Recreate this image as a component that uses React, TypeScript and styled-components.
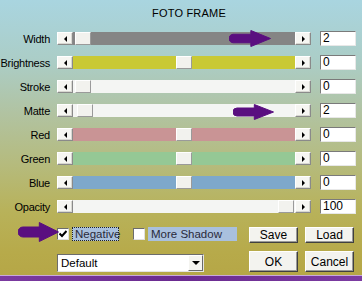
import styled, { createGlobalStyle } from "styled-components"

const GlobalStyle = createGlobalStyle`
    html, body {
        margin: 0;
        padding: 0;
    }
    body {
        font-family: "Liberation Sans", Arial, sans-serif;
        color: #000;
    }
`

const Window = styled.div`
    position: relative;
    width: 362px;
    height: 281px;
    overflow: hidden;
    display: flex;
    flex-direction: column;
    background: linear-gradient(
        to bottom,
        #a9d5e0 0%,
        #abcdc6 22%,
        #b1c3a2 40%,
        #b5bb7e 58%,
        #b8b25a 75%,
        #b7aa4a 90%,
        #b5a646 100%
    );
`

const Title = styled.div`
    height: 13px;
    line-height: 13px;
    padding-top: 7px;
    margin-bottom: 11px;
    padding-left: 16px;
    text-align: center;
    font-size: 11px;
    letter-spacing: 0.2px;
`

const Rows = styled.div`
    display: flex;
    flex-direction: column;
    gap: 9px;
`

const Row = styled.div`
    display: grid;
    grid-template-columns: 50px 254px 36px;
    column-gap: 7px;
    height: 15px;
    align-items: start;
`

const Label = styled.div`
    text-align: right;
    font-size: 11px;
    letter-spacing: -0.25px;
    line-height: 15px;
    margin-top: 1px;
    white-space: nowrap;
`

const SliderBox = styled.div`
    display: flex;
    height: 13px;
    margin-top: 1px;
`

const ScrollBtn = styled.div`
    width: 16px;
    height: 13px;
    box-sizing: border-box;
    background: #f6f6f2;
    border: 1px solid;
    border-color: #ffffff #8a8a8a #8a8a8a #ffffff;
    box-shadow: inset -1px -1px 0 #d8d8d2;
    display: flex;
    align-items: center;
    justify-content: center;
`

const Tri = styled.span<{ $dir: "left" | "right" | "down" }>`
    width: 0;
    height: 0;
    border-style: solid;
    border-color: transparent;
    ${p =>
        p.$dir === "left"
            ? "border-width: 3px 3px 3px 0; border-right-color: #000;"
            : p.$dir === "right"
            ? "border-width: 3px 0 3px 3px; border-left-color: #000;"
            : "border-width: 4px 4px 0 4px; border-top-color: #000;"}
`

const Track = styled.div<{ $fill: string }>`
    position: relative;
    flex: 1;
    background: ${p => p.$fill};
`

const Thumb = styled.div`
    position: absolute;
    top: 0;
    width: 16px;
    height: 13px;
    box-sizing: border-box;
    background: #f2f2ee;
    border: 1px solid;
    border-color: #ffffff #9a9a9a #9a9a9a #ffffff;
`

const ValueBox = styled.div`
    width: 36px;
    height: 15px;
    box-sizing: border-box;
    margin-left: 2px;
    background: #fff;
    border: 1px solid;
    border-color: #7a7a7a #e8e8e8 #e8e8e8 #7a7a7a;
    font-size: 12px;
    line-height: 13px;
    padding-left: 2px;
`

const Bottom = styled.div`
    display: flex;
    margin-top: 13px;
`

const LeftCol = styled.div`
    padding-left: 57px;
    width: 149px;
    flex-shrink: 0;
    display: flex;
    flex-direction: column;
    gap: 13px;
`

const CheckRow = styled.div`
    display: flex;
    align-items: center;
    height: 14px;
    & > * {
        flex-shrink: 0;
    }
`

const CheckBox = styled.div`
    width: 12px;
    height: 12px;
    box-sizing: border-box;
    background: #fff;
    border: 1px solid;
    border-color: #6c6c6c #e0e0e0 #e0e0e0 #6c6c6c;
    display: flex;
    align-items: center;
    justify-content: center;
`

const CheckLabel = styled.div<{ $focus?: boolean; $w: number }>`
    margin-left: 3px;
    width: ${p => p.$w}px;
    height: 14px;
    box-sizing: border-box;
    background: #a9c0de;
    font-size: 11.5px;
    line-height: 12px;
    color: #2a2a3a;
    padding-left: 2px;
    white-space: nowrap;
    border: 1px ${p => (p.$focus ? "dotted #222" : "solid transparent")};
`

const Spacer = styled.div`
    width: 14px;
`

const Select = styled.div`
    width: 147px;
    height: 18px;
    box-sizing: border-box;
    background: #fff;
    border: 1px solid;
    border-color: #6c6c6c #e4e4e4 #e4e4e4 #6c6c6c;
    display: flex;
    align-items: center;
    font-size: 11.5px;
    padding-left: 3px;
`

const SelectText = styled.span`
    flex: 1;
`

const SelectBtn = styled.div`
    width: 15px;
    height: 16px;
    box-sizing: border-box;
    background: #f4f4f0;
    border: 1px solid;
    border-color: #ffffff #6a6a6a #6a6a6a #ffffff;
    display: flex;
    align-items: center;
    justify-content: center;
`

const ButtonGrid = styled.div`
    margin-left: 43px;
    display: grid;
    grid-template-columns: 49px 49px;
    grid-template-rows: 16px 21px;
    column-gap: 7px;
    row-gap: 8px;
`

const Button = styled.div`
    box-sizing: border-box;
    background: #f3f3ef;
    border: 1px solid;
    border-color: #ffffff #404040 #404040 #ffffff;
    box-shadow: inset -1px -1px 0 #9a9a96;
    display: flex;
    align-items: center;
    justify-content: center;
    font-size: 12px;
`

const Strip = styled.div`
    margin-top: auto;
    height: 5px;
    border-top: 1px solid #c9a8dc;
    background: linear-gradient(to right, #7b3aa0, #6a2a90 50%, #7c3ca2);
`

const Pointer = styled.svg<{ $x: number; $y: number }>`
    position: absolute;
    left: ${p => p.$x}px;
    top: ${p => p.$y}px;
`

const sliders = [
    { label: "Width", fill: "#858585", thumb: 2, value: "2" },
    { label: "Brightness", fill: "#c9c934", thumb: 103, value: "0" },
    { label: "Stroke", fill: "#f4f5f3", thumb: 2, value: "0" },
    { label: "Matte", fill: "#f4f5f3", thumb: 4, value: "2" },
    { label: "Red", fill: "#c99495", thumb: 103, value: "0" },
    { label: "Green", fill: "#95c895", thumb: 103, value: "0" },
    { label: "Blue", fill: "#7ea8cb", thumb: 103, value: "0" },
    { label: "Opacity", fill: "#f4f5f3", thumb: 205, value: "100" },
]

function PurpleArrow({ x, y, w, h }: { x: number; y: number; w: number; h: number }) {
    const mid = h / 2
    const shaft = h * 0.25
    const base = w * 0.52
    return (
        <Pointer $x={x} $y={y} width={w} height={h} viewBox={`0 0 ${w} ${h}`}>
            <path
                d={`M ${shaft} ${mid - shaft} L ${base} ${mid - shaft} L ${base} 0.5 L ${w - 0.5} ${mid} L ${base} ${h - 0.5} L ${base} ${mid + shaft} L ${shaft} ${mid + shaft} A ${shaft} ${shaft} 0 0 1 ${shaft} ${mid - shaft} Z`}
                fill="#5a0f80"
                stroke="#5a0f80"
                strokeWidth={1}
                strokeLinejoin="round"
            />
        </Pointer>
    )
}

function App() {
    return (
        <Window>
            <GlobalStyle />
            <Title>FOTO FRAME</Title>
            <Rows>
                {sliders.map(s => (
                    <Row key={s.label}>
                        <Label>{s.label}</Label>
                        <SliderBox>
                            <ScrollBtn>
                                <Tri $dir="left" />
                            </ScrollBtn>
                            <Track $fill={s.fill}>
                                <Thumb style={{ left: s.thumb }} />
                            </Track>
                            <ScrollBtn>
                                <Tri $dir="right" />
                            </ScrollBtn>
                        </SliderBox>
                        <ValueBox>{s.value}</ValueBox>
                    </Row>
                ))}
            </Rows>
            <Bottom>
                <LeftCol>
                    <CheckRow>
                        <CheckBox>
                            <svg width="8" height="8" viewBox="0 0 8 8">
                                <path d="M0.5 3.5 L3 6 L7.5 1" fill="none" stroke="#000" strokeWidth="2" />
                            </svg>
                        </CheckBox>
                        <CheckLabel $focus $w={47}>Negative</CheckLabel>
                        <Spacer />
                        <CheckBox />
                        <CheckLabel $w={89}>More Shadow</CheckLabel>
                    </CheckRow>
                    <Select>
                        <SelectText>Default</SelectText>
                        <SelectBtn>
                            <Tri $dir="down" />
                        </SelectBtn>
                    </Select>
                </LeftCol>
                <ButtonGrid>
                    <Button>Save</Button>
                    <Button>Load</Button>
                    <Button>OK</Button>
                    <Button>Cancel</Button>
                </ButtonGrid>
            </Bottom>
            <Strip />
            <PurpleArrow x={229} y={30} w={42} h={17} />
            <PurpleArrow x={233} y={104} w={41} h={16} />
            <PurpleArrow x={18} y={222} w={41} h={20} />
        </Window>
    )
}

export default App
